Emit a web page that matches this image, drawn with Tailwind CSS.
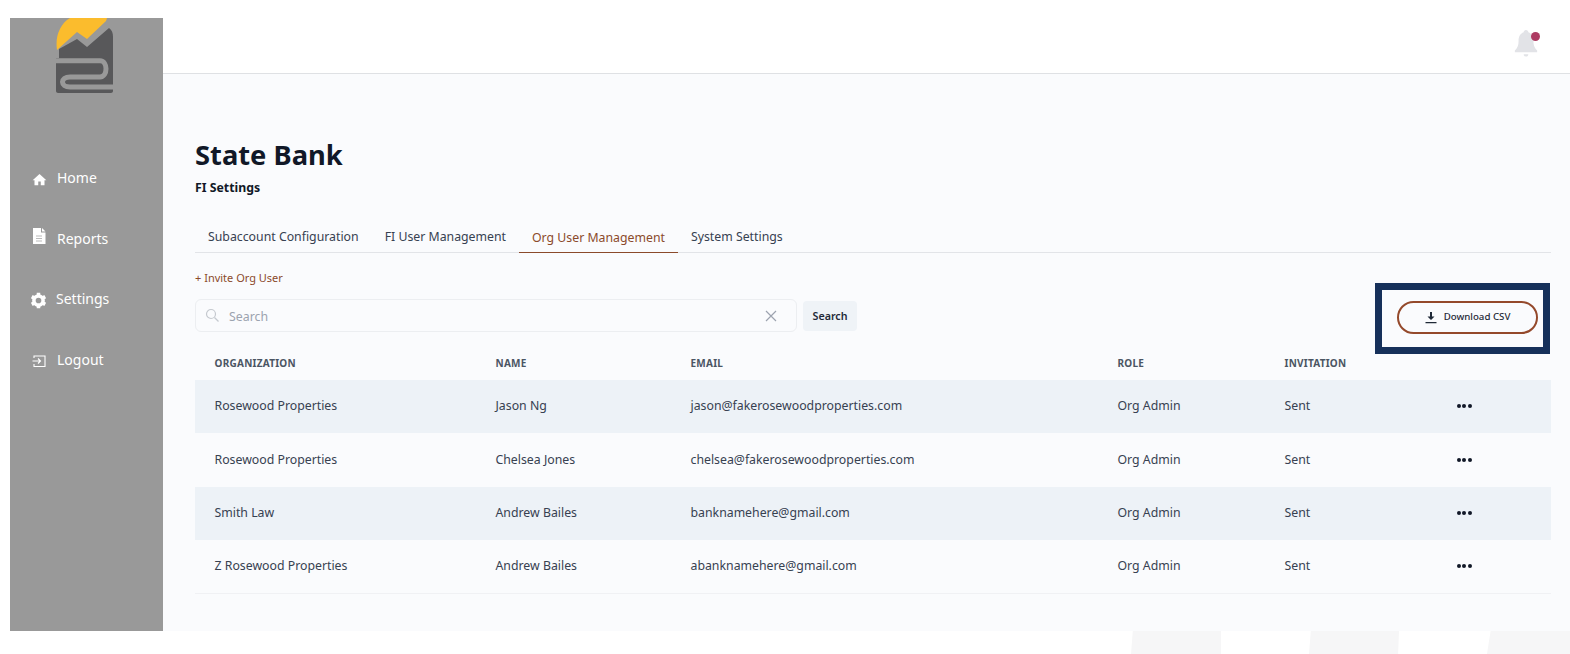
<!DOCTYPE html>
<html><head><meta charset="utf-8"><script src="https://cdn.jsdelivr.net/npm/@tailwindcss/browser@4"></script></head>
<body class="bg-white overflow-hidden font-['Noto_Sans',sans-serif]">
<div class="w-[1570px] h-[654px] flex flex-col pt-[18px] pl-[10px] overflow-hidden">
  <div class="flex h-[613px] shrink-0">
    <aside class="w-[153px] bg-[#999999] shrink-0 flex flex-col text-white">
      <svg class="ml-[46px] w-[58px] h-[75px] shrink-0" viewBox="0 0 58 75">
        <path d="M1 32C-1 18 4 6 14 0H51L50 3L31 21L21 14L1 32Z" fill="#fbbc2d"/>
        <path d="M3 31 21 21 31 29 53 10C56 12 57 15 57 19V73C57 74 56 75 55 75H2C1 75 0 74 0 73V40H3Z" fill="#58585a"/>
        <path d="M0 42.700H44C52 42.700 52 59 44 59H14C4 59 4 69 14 69H58" fill="none" stroke="#999" stroke-width="5"/>
      </svg>
      <nav class="mt-[75px] flex flex-col text-[14px] leading-5">
        <a class="h-[20px] flex items-center pl-[22px] gap-[10px]"><svg class="w-[15px] h-[15px] mt-[3px]" viewBox="0 0 24 24" fill="#fff"><path d="M12 3 1 13h3v8h6v-6h4v6h6v-8h3z"/></svg><span>Home</span></a>
        <a class="mt-[40px] h-[21px] flex items-center pl-[22px] gap-[11px]"><svg class="w-[14px] h-[17px] -mt-[5px]" viewBox="0 0 14 17"><path fill="#fff" d="M1 0h8v4.500h4.500V16H1z"/><path fill="#fff" d="M10 0l3.500 3.500H10z"/><path stroke="#bbb" d="M4 8h6M4 10.500h6M4 13h6"/></svg><span>Reports</span></a>
        <a class="mt-[40px] h-[20px] flex items-center pl-[20px] gap-[9px]"><svg class="w-[17px] h-[17px] mt-[3px]" viewBox="0 0 24 24"><circle cx="12" cy="12" r="6.500" fill="none" stroke="#fff" stroke-width="5"/><path stroke="#fff" stroke-width="5" d="M12 1v5M12 18v5M2.500 6.500l4.300 2.500M17.200 15l4.300 2.500M2.500 17.500 6.800 15M17.200 9l4.300-2.500"/></svg><span>Settings</span></a>
        <a class="mt-[41px] h-[20px] flex items-center pl-[22px] gap-[11px]"><svg class="w-[14px] h-[14px] mt-[1px]" viewBox="0 0 14 14" fill="none" stroke="#fff" stroke-width="1.100"><path d="M2 4V2h11v10.500H2V10"/><path d="M0.500 7H8M6 4.500 8.500 7 6 9.500"/></svg><span>Logout</span></a>
      </nav>
    </aside>
    <div class="flex-1 flex flex-col min-w-0">
      <header class="h-[56px] shrink-0 bg-white border-b border-[#dfe1e4] flex justify-end pr-[31px] pt-[10px]">
        <div class="relative w-[26px] h-[30px]">
          <svg class="w-[26px] h-[30px]" viewBox="0 0 28 32" fill="#e2e3e7"><path d="M14 2c-1.500 0-2.500 1-2.500 2.500C7.500 6 6 9.500 6 14c0 4-1 7-4 10v2h24v-2c-3-3-4-6-4-10 0-4.500-1.500-8-5.500-9.500C16.500 3 15.500 2 14 2z"/><path d="M11.500 28h5c0 1.500-1 2.500-2.500 2.500s-2.500-1-2.500-2.500z"/></svg>
          <span class="absolute right-[-1px] top-[4px] w-[9px] h-[9px] rounded-full bg-[#ad3b62]"></span>
        </div>
      </header>
      <main class="flex-1 bg-[#fafbfd] pl-[32px] pr-[19px] pt-[60px] min-h-0">
        <h1 class="text-[27.300px] leading-[41px] font-bold text-[#111827]">State Bank</h1>
        <p class="mt-[4px] text-[12.300px] leading-[18px] font-bold text-[#111827]">FI Settings</p>
        <div class="mt-[23px] h-[33px] flex border-b border-[#e2e4e8] text-[12.300px] text-[#374151]">
          <button class="px-[13px] h-[33px] leading-[33px]">Subaccount Configuration</button>
          <button class="px-[13px] h-[33px] leading-[33px]">FI User Management</button>
          <button class="px-[13px] h-[33px] leading-[35px] text-[#8b4a2b] border-b border-[#8b4a2b]">Org User Management</button>
          <button class="px-[13px] h-[33px] leading-[33px]">System Settings</button>
        </div>
        <a class="block mt-[17px] text-[11px] leading-[16px] text-[#8b4a2b]">+ Invite Org User</a>
        <div class="relative h-[71px] mt-[5px] flex items-start">
          <div class="mt-[8px] w-[602px] h-[33px] rounded-[6px] border border-[#eceef1] bg-[#fafbfd] flex items-center pl-[9px] pr-[19px] text-[#9ca3af]">
            <svg class="w-[14px] h-[14px] -mt-[2px]" viewBox="0 0 14 14" fill="none" stroke="#c5c9cf" stroke-width="1.200"><circle cx="6" cy="6" r="4.500"/><path d="m9.500 9.500 4 4"/></svg>
            <span class="ml-[10px] mt-[4px] text-[12.350px] flex-1">Search</span>
            <svg class="w-[12px] h-[12px]" viewBox="0 0 12 12" stroke="#9ca3af" stroke-width="1.200"><path d="m1 1 10 10M11 1 1 11"/></svg>
          </div>
          <button class="mt-[10px] ml-[6px] w-[54px] h-[30px] rounded-[4px] bg-[#eff3f7] text-[10.700px] font-semibold text-[#1f2937]">Search</button>
          <div class="absolute right-[1px] top-[-8px] w-[175px] h-[71px] border-[7px] border-[#16305a] bg-[#fafbfd] flex justify-end pr-[5px] pt-[11px]">
            <button class="w-[141px] h-[33px] rounded-full border-[2.500px] border-[#94492b] flex items-center justify-center gap-[7px] text-[9.700px] font-medium text-[#1f2937] bg-[#fafbfd]">
              <svg class="w-[12px] h-[12px]" viewBox="0 0 12 12" fill="#1f2937"><path d="M5 0h2v4.500h2.500L6 8 2.500 4.500H5zM0.500 10h11v1.300H0.500z"/></svg>Download CSV
            </button>
          </div>
        </div>
        <div class="grid grid-cols-[281px_195px_427px_167px_173px_94px] h-[18px] -mt-[8px] pl-[19.500px] items-center text-[10px] font-bold tracking-[0.25px] text-[#4b5563] w-[1356px]">
          <span>ORGANIZATION</span><span>NAME</span><span>EMAIL</span><span>ROLE</span><span>INVITATION</span><span></span>
        </div>
        <div class="mt-[8px] w-[1356px] text-[12.300px] text-[#374151] border-b border-[#f0f1f4]">
          <div class="grid grid-cols-[281px_195px_427px_167px_172px_95px] h-[53px] items-center pl-[19.500px] bg-[#edf2f7]"><span>Rosewood Properties</span><span>Jason Ng</span><span>jason@fakerosewoodproperties.com</span><span>Org Admin</span><span>Sent</span><span class="flex gap-[1.500px] -mt-[1px]"><i class="w-[4px] h-[4px] rounded-full bg-[#111827]"></i><i class="w-[4px] h-[4px] rounded-full bg-[#111827]"></i><i class="w-[4px] h-[4px] rounded-full bg-[#111827]"></i></span></div>
          <div class="grid grid-cols-[281px_195px_427px_167px_172px_95px] h-[54px] items-center pl-[19.500px]"><span>Rosewood Properties</span><span>Chelsea Jones</span><span>chelsea@fakerosewoodproperties.com</span><span>Org Admin</span><span>Sent</span><span class="flex gap-[1.500px] -mt-[1px]"><i class="w-[4px] h-[4px] rounded-full bg-[#111827]"></i><i class="w-[4px] h-[4px] rounded-full bg-[#111827]"></i><i class="w-[4px] h-[4px] rounded-full bg-[#111827]"></i></span></div>
          <div class="grid grid-cols-[281px_195px_427px_167px_172px_95px] h-[53px] items-center pl-[19.500px] bg-[#edf2f7]"><span>Smith Law</span><span>Andrew Bailes</span><span>banknamehere@gmail.com</span><span>Org Admin</span><span>Sent</span><span class="flex gap-[1.500px] -mt-[1px]"><i class="w-[4px] h-[4px] rounded-full bg-[#111827]"></i><i class="w-[4px] h-[4px] rounded-full bg-[#111827]"></i><i class="w-[4px] h-[4px] rounded-full bg-[#111827]"></i></span></div>
          <div class="grid grid-cols-[281px_195px_427px_167px_172px_95px] h-[53px] items-center pl-[19.500px]"><span>Z Rosewood Properties</span><span>Andrew Bailes</span><span>abanknamehere@gmail.com</span><span>Org Admin</span><span>Sent</span><span class="flex gap-[1.500px] -mt-[1px]"><i class="w-[4px] h-[4px] rounded-full bg-[#111827]"></i><i class="w-[4px] h-[4px] rounded-full bg-[#111827]"></i><i class="w-[4px] h-[4px] rounded-full bg-[#111827]"></i></span></div>
        </div>
      </main>
    </div>
  </div>
  <div class="flex-1 flex pl-[1121px] gap-[88px]">
    <div class="w-[90px] shrink-0 bg-[#f6f6f7] [clip-path:polygon(2%_0,100%_0,100%_100%,0_100%)]"></div>
    <div class="w-[90px] shrink-0 bg-[#f6f6f7] [clip-path:polygon(2%_0,100%_0,99%_100%,0_100%)]"></div>
    <div class="w-[90px] shrink-0 bg-[#f6f6f7] [clip-path:polygon(4%_0,100%_0,100%_100%,0_100%)]"></div>
  </div>
</div>
</body></html>
